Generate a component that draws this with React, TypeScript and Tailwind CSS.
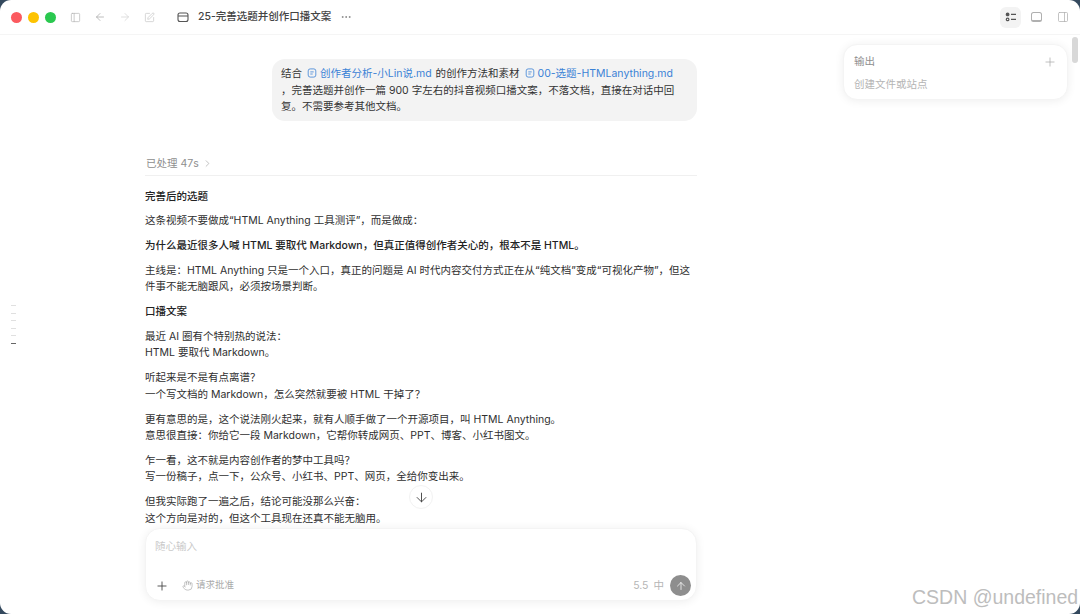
import { ArrowDown, ArrowLeft, ArrowRight, ArrowUp, ChevronRight, Ellipsis, Hand, PanelLeft, PanelRight, Plus, SquarePen } from "lucide-react";

const font = "font-['Inter','Noto_Sans_CJK_SC',sans-serif]";

const paragraphs: { lines: string[]; bold?: boolean }[] = [
  { lines: ["完善后的选题"], bold: true },
  { lines: ["这条视频不要做成“HTML Anything 工具测评”，而是做成："] },
  { lines: ["为什么最近很多人喊 HTML 要取代 Markdown，但真正值得创作者关心的，根本不是 HTML。"], bold: true },
  { lines: ["主线是：HTML Anything 只是一个入口，真正的问题是 AI 时代内容交付方式正在从“纯文档”变成“可视化产物”，但这", "件事不能无脑跟风，必须按场景判断。"] },
  { lines: ["口播文案"], bold: true },
  { lines: ["最近 AI 圈有个特别热的说法：", "HTML 要取代 Markdown。"] },
  { lines: ["听起来是不是有点离谱？", "一个写文档的 Markdown，怎么突然就要被 HTML 干掉了？"] },
  { lines: ["更有意思的是，这个说法刚火起来，就有人顺手做了一个开源项目，叫 HTML Anything。", "意思很直接：你给它一段 Markdown，它帮你转成网页、PPT、博客、小红书图文。"] },
  { lines: ["乍一看，这不就是内容创作者的梦中工具吗？", "写一份稿子，点一下，公众号、小红书、PPT、网页，全给你变出来。"] },
  { lines: ["但我实际跑了一遍之后，结论可能没那么兴奋：", "这个方向是对的，但这个工具现在还真不能无脑用。"] },
];

function FileLink({ name }: { name: string }) {
  return (
    <span className="mr-[1px] text-[#3b82d6]">
      <svg viewBox="0 0 10 10" className="ml-[2px] mr-[3px] inline h-[10px] w-[10px] align-[-1px]" fill="none" stroke="currentColor" strokeWidth="0.8">
        <rect x="1.2" y="0.9" width="7.6" height="8.2" rx="2" />
        <path d="M3.3 3.9h3.4M3.3 6h2.4" />
      </svg>
      {name}
    </span>
  );
}

function FolderIcon() {
  return (
    <svg viewBox="0 0 12 12" className="ml-[22px] h-[12px] w-[12px] text-[#555]" fill="none" stroke="currentColor" strokeWidth="1.1">
      <rect x="1" y="2" width="10" height="8.5" rx="2" />
      <path d="M1 5h10" />
    </svg>
  );
}

function TasksIcon() {
  return (
    <svg viewBox="0 0 12 12" className="h-[12px] w-[12px] text-[#555]" fill="none" stroke="currentColor" strokeWidth="1.2">
      <circle cx="2.6" cy="3.4" r="1.3" fill="currentColor" />
      <circle cx="2.6" cy="8.4" r="1.3" />
      <path d="M6 3.4h5M6 8.4h5" />
    </svg>
  );
}

export default function App() {
  return (
    <div className={`${font} relative flex h-[614px] w-[1080px] flex-col overflow-hidden bg-[#34495e] text-[10.5px] text-[#2f2f2f]`}>
      <div className="relative flex h-full flex-col overflow-hidden rounded-[11px] bg-white">
        {/* title bar */}
        <header className="flex h-[35px] shrink-0 items-center border-b border-[#f5f5f5] pl-[11px] pr-[7px]">
          <div className="flex gap-[6px]">
            <span className="h-[11px] w-[11px] rounded-full bg-[#fb5a5f]" />
            <span className="h-[11px] w-[11px] rounded-full bg-[#fdc301]" />
            <span className="h-[11px] w-[11px] rounded-full bg-[#2ac84f]" />
          </div>
          <PanelLeft className="ml-[14px] h-[11px] w-[11px] text-[#b5b5b5]" strokeWidth={1.5} />
          <ArrowLeft className="ml-[13px] h-[12px] w-[12px] text-[#a8a8a8]" strokeWidth={1.5} />
          <ArrowRight className="ml-[13px] h-[12px] w-[12px] text-[#d4d4d4]" strokeWidth={1.5} />
          <SquarePen className="ml-[13px] h-[11px] w-[11px] text-[#c4c4c4]" strokeWidth={1.5} />
          <FolderIcon />
          <span className="ml-[9px] text-[10.5px] font-medium text-[#444]">25-完善选题并创作口播文案</span>
          <Ellipsis className="ml-[9px] h-[12px] w-[12px] text-[#777]" strokeWidth={1.5} />
          <div className="ml-auto flex items-center gap-[5px]">
            <span className="flex h-[21px] w-[21px] items-center justify-center rounded-[6px] bg-[#f3f3f3]">
              <TasksIcon />
            </span>
            <span className="flex h-[21px] w-[21px] items-center justify-center">
              <span className="h-[10px] w-[11px] rounded-[2.5px] border border-b-2 border-[#b0b0b0]" />
            </span>
            <span className="flex h-[21px] w-[21px] items-center justify-center">
              <PanelRight className="h-[12px] w-[12px] text-[#b0b0b0]" strokeWidth={1.5} />
            </span>
          </div>
        </header>

        {/* conversation */}
        <main className="flex-1 overflow-hidden pl-[145px] pt-[24px]">
          <div className="w-[552px]">
            <div className="ml-auto w-[425px] rounded-[13px] bg-[#f3f3f3] px-[9px] pb-[5px] pt-[7px] leading-[16.5px] text-[#333]">
              结合 <FileLink name="创作者分析-小Lin说.md" /> 的创作方法和素材 <FileLink name="00-选题-HTMLanything.md" />
              <br />，完善选题并创作一篇 900 字左右的抖音视频口播文案，不落文档，直接在对话中回
              <br />复。不需要参考其他文档。
            </div>
            <div className="mt-[36px] flex items-center gap-[3px] border-b border-[#f0f0f0] pb-[4px] pl-px leading-[14px] text-[#8e8e8e]">
              已处理 47s <ChevronRight className="h-[11px] w-[11px] text-[#a8a8a8]" strokeWidth={1.5} />
            </div>
            <div className="mt-[13px] flex flex-col gap-[8.3px]">
              {paragraphs.map((p) => (
                <p key={p.lines[0]} className={`leading-[16.5px] ${p.bold ? "font-medium text-[#222]" : ""}`}>
                  {p.lines.map((l) => (
                    <span key={l} className="block whitespace-nowrap">{l}</span>
                  ))}
                </p>
              ))}
            </div>
          </div>
        </main>

        {/* scroll down button */}
        <button className="absolute left-[409px] top-[485px] flex h-[24px] w-[24px] items-center justify-center rounded-full border border-[#f2f2f2] bg-white">
          <ArrowDown className="h-[15px] w-[15px] text-[#444]" strokeWidth={1.5} />
        </button>

        {/* composer */}
        <div className="absolute left-[145px] top-[528px] flex h-[73px] w-[552px] flex-col justify-between rounded-[15px] border border-[#f4f4f4] bg-white pb-[4px] pl-[9px] pr-[5px] pt-[10px] shadow-[0_1px_10px_rgba(0,0,0,0.07)]">
          <span className="leading-[16px] text-[#c9c9c9]">随心输入</span>
          <div className="flex items-center">
            <Plus className="h-[14px] w-[14px] text-[#444]" strokeWidth={1.5} />
            <Hand className="ml-[13px] h-[11px] w-[11px] text-[#aaa]" strokeWidth={1.5} />
            <span className="ml-[3px] text-[9.5px] text-[#aaa]">请求批准</span>
            <span className="ml-auto text-[#b5b5b5]">5.5</span>
            <span className="ml-[5px] text-[#b5b5b5]">中</span>
            <span className="ml-[6px] flex h-[21px] w-[21px] items-center justify-center rounded-full bg-[#8e8e8e]">
              <ArrowUp className="h-[12px] w-[12px] text-white" strokeWidth={1.5} />
            </span>
          </div>
        </div>

        {/* output card */}
        <aside className="absolute left-[843px] top-[44px] flex h-[56px] w-[225px] flex-col justify-between rounded-[14px] border border-[#f4f4f4] bg-white pb-[6px] pl-[10px] pr-[10px] pt-[9px] shadow-[0_1px_10px_rgba(0,0,0,0.07)]">
          <div className="flex items-center justify-between text-[#8e8e8e]">
            <span>输出</span>
            <Plus className="h-[14px] w-[14px] text-[#aaa]" strokeWidth={1.25} />
          </div>
          <span className="text-[#b5b5b5]">创建文件或站点</span>
        </aside>

        {/* scrollbar */}
        <div className="absolute right-[2px] top-[37px] h-[26px] w-[6px] rounded-full bg-[#d8d8d8]" />

        {/* outline ticks */}
        <div className="absolute left-[11px] top-[305px] flex flex-col gap-[6.5px]">
          {[0, 1, 2, 3, 4].map((i) => (
            <span key={i} className="h-px w-[5px] bg-[#e0e0e0]" />
          ))}
          <span className="h-px w-[5px] bg-[#666]" />
        </div>

        {/* watermark */}
        <span className="absolute left-[912px] top-[586px] font-['Liberation_Sans',sans-serif] text-[19.5px] leading-[22px] text-[#bdbdbd]">CSDN @undefined</span>
      </div>
    </div>
  );
}
